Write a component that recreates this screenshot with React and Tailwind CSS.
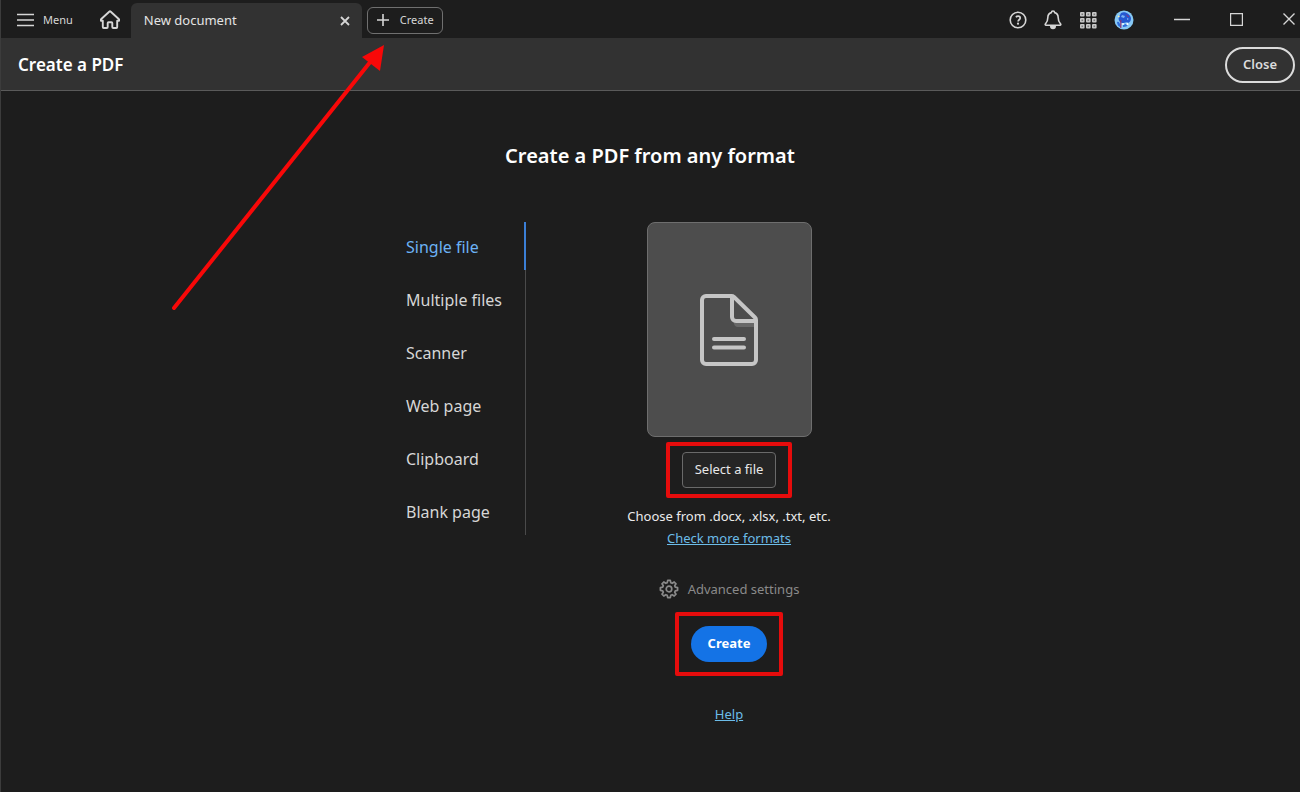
import { useState } from 'react'

const sources = [
  { id: 'single', label: 'Single file' },
  { id: 'multiple', label: 'Multiple files' },
  { id: 'scanner', label: 'Scanner' },
  { id: 'web', label: 'Web page' },
  { id: 'clipboard', label: 'Clipboard' },
  { id: 'blank', label: 'Blank page' }
]

const dots = [1, 7, 13]

function HomeIcon() {
  return (
    <svg className="w-5 h-5" viewBox="0 0 20 20" fill="none" stroke="currentColor" strokeWidth="1.9" strokeLinejoin="round" strokeLinecap="round" aria-hidden="true">
      <path d="M9.2 1.7 1 9.3c-.6.7-.2 1.5.6 1.5h1.2v6.3c0 .5.4.9.9.9h3.1c.5 0 .9-.4.9-.9v-4c0-.5.3-.8.8-.8h3c.5 0 .8.3.8.8v4c0 .5.4.9.9.9h3.1c.5 0 .9-.4.9-.9v-6.3h1.2c.8 0 1.2-.8.6-1.5l-8.2-7.6a1.2 1.2 0 0 0-1.6 0Z" />
    </svg>
  )
}

function HelpIcon() {
  return (
    <svg className="w-[18px] h-[18px]" viewBox="0 0 18 18" fill="none" stroke="currentColor" aria-hidden="true">
      <circle cx="9" cy="9" r="7.8" strokeWidth="1.6" />
      <path d="M6.9 6.2c.6-.7 1.3-1 2.2-1 1.2 0 2.1.7 2.1 1.8 0 1.7-2.1 1.8-2.1 3.5" strokeWidth="1.7" />
      <circle cx="9" cy="12.7" r="1.1" fill="currentColor" stroke="none" />
    </svg>
  )
}

function BellIcon() {
  return (
    <svg className="w-[18px] h-5" viewBox="0 0 18 20" fill="none" stroke="currentColor" strokeWidth="1.6" strokeLinejoin="round" aria-hidden="true">
      <path d="M7.4 2.6C7.4 1.7 8.1 1 9 1s1.6.7 1.6 1.6c2.4.6 3.6 2.6 3.6 5.2 0 3.4.8 4.6 2.3 6 .6.6.3 1.4-.5 1.4H2c-.8 0-1.1-.8-.5-1.4 1.5-1.4 2.3-2.6 2.3-6 0-2.6 1.2-4.6 3.6-5.2Z" />
      <path d="M6.8 16.2h4.4a2.2 2.2 0 0 1-4.4 0Z" fill="currentColor" />
    </svg>
  )
}

function AppsIcon() {
  return (
    <svg className="w-[18px] h-[18px]" viewBox="0 0 18 18" aria-hidden="true">
      {dots.map((y) =>
        dots.map((x) => (
          <g key={`${x}-${y}`}>
            <rect x={x} y={y} width="4.6" height="4.6" rx="1" fill="#c9c9c9" />
            <rect x={x + 1.5} y={y + 1.5} width="1.6" height="1.6" fill="#7c7c7c" />
          </g>
        ))
      )}
    </svg>
  )
}

function Avatar() {
  return (
    <svg className="w-5 h-5" viewBox="0 0 20 20" aria-hidden="true">
      <circle cx="10" cy="10" r="9.5" fill="#86c8f5" />
      <path d="M7 3c4-2 9 1 10 5 0 3-1 4-3 5-2-2-4 1-6 0-3-1-4-4-3-6Z" fill="#2558d0" />
      <path d="M3 12c2-1 3 1 4 5-2 0-4-2-4-5ZM9 15c2-1 4-1 6-2-1 3-3 4-6 4Z" fill="#2f6cda" />
      <path d="M8 5l3 1-1 2-3-1ZM13 8l2 1-2 1Z" fill="#79b4f4" />
      <circle cx="9" cy="14" r="1" fill="#f2fbff" />
      <circle cx="13.5" cy="14" r="1.2" fill="#f2fbff" />
      <path d="M6.8 10v8" stroke="#9b2c6a" strokeWidth="1.1" />
      <path d="M12.5 5l2.5 2" stroke="#a0306c" strokeWidth="1" />
      <path d="M4 6l1.5 1" stroke="#fff0a0" strokeWidth="1.4" />
    </svg>
  )
}

function GearIcon() {
  return (
    <svg className="w-5 h-5" viewBox="0 0 20 20" fill="none" stroke="currentColor" strokeWidth="1.7" strokeLinejoin="round" aria-hidden="true">
      <path d="M8.7 1.4h2.6l.5 2.3 1.4.6 2-1.3 1.8 1.8-1.3 2 .6 1.4 2.3.5v2.6l-2.3.5-.6 1.4 1.3 2-1.8 1.8-2-1.3-1.4.6-.5 2.3H8.7l-.5-2.3-1.4-.6-2 1.3L3 15.2l1.3-2-.6-1.4-2.3-.5V8.7l2.3-.5.6-1.4-1.3-2L4.8 3l2 1.3 1.4-.6Z" />
      <circle cx="10" cy="10" r="2.8" />
    </svg>
  )
}

function DocumentIcon() {
  return (
    <svg className="w-[60px] h-[74px]" viewBox="0 0 60 74" fill="none" aria-hidden="true">
      <path d="M35 29h21v5H39a4 4 0 0 1-4-5Z" fill="#686868" />
      <g stroke="#c6c6c6" strokeWidth="4" strokeLinejoin="round" strokeLinecap="round">
        <path d="M7 3h25.500c1 0 1.800.4 2.500 1l21 20.500c.7.7 1 1.500 1 2.500v40a4 4 0 0 1-4 4H7a4 4 0 0 1-4-4V7a4 4 0 0 1 4-4Z" />
        <path d="M33 4v20a4 4 0 0 0 4 4h19" />
        <path d="M15 46h30M15 54.500h30" />
      </g>
    </svg>
  )
}

function TitleBar() {
  return (
    <header className="flex h-[38px] items-center text-[#d6d6d6]">
      <button className="ml-[17px] mt-[2px] flex items-center gap-[9px] text-[11px]">
        <svg className="w-[17px] h-[14px]" viewBox="0 0 17 14" stroke="currentColor" strokeWidth="1.7" aria-hidden="true">
          <path d="M0 1.5h17M0 7h17M0 12.5h17" />
        </svg>
        Menu
      </button>
      <button className="ml-[27px] mt-[2px]" aria-label="Home">
        <HomeIcon />
      </button>
      <div className="ml-[11px] mt-[3px] flex h-[35px] w-[231px] items-center justify-between rounded-t-md bg-[#323232] pl-[13px] pr-3">
        <span className="text-[13px] text-[#e4e4e4]">New document</span>
        <button aria-label="Close tab">
          <svg className="w-[10px] h-[10px]" viewBox="0 0 10 10" stroke="currentColor" strokeWidth="1.8" aria-hidden="true">
            <path d="M1 1l8 8M9 1 1 9" />
          </svg>
        </button>
      </div>
      <button className="ml-[5px] mt-[2px] flex h-[27px] items-center gap-[11px] rounded-md border border-[#707070] pl-[9px] pr-2 text-[11px]">
        <svg className="w-3 h-3" viewBox="0 0 12 12" stroke="currentColor" strokeWidth="1.6" aria-hidden="true">
          <path d="M6 0v12M0 6h12" />
        </svg>
        Create
      </button>

      <div className="ml-auto mt-[2px] flex items-center gap-[17px]">
        <button aria-label="Help"><HelpIcon /></button>
        <button aria-label="Notifications"><BellIcon /></button>
        <button aria-label="Apps"><AppsIcon /></button>
        <button aria-label="Account"><Avatar /></button>
      </div>

      {/* Window controls */}
      <div className="ml-10 mr-[5px] flex items-center gap-10">
        <button aria-label="Minimize">
          <svg className="w-4 h-3" viewBox="0 0 16 12" stroke="currentColor" strokeWidth="1.5" aria-hidden="true">
            <path d="M0 6.5h16" />
          </svg>
        </button>
        <button aria-label="Maximize">
          <svg className="w-[13px] h-[13px]" viewBox="0 0 13 13" fill="none" stroke="currentColor" strokeWidth="1.2" aria-hidden="true">
            <path d="M.6.6h11.8v11.8H.6Z" />
          </svg>
        </button>
        <button aria-label="Close window">
          <svg className="w-3 h-3" viewBox="0 0 12 12" stroke="currentColor" strokeWidth="1.4" aria-hidden="true">
            <path d="M.5.5l11 11M11.5.5l-11 11" />
          </svg>
        </button>
      </div>
    </header>
  )
}

function SourceNav({ active, onSelect }) {
  return (
    <nav className="flex w-[158px] shrink-0 flex-col gap-[5px] self-start border-r border-[#4a4a4a]">
      {sources.map((source) => (
        <button
          key={source.id}
          onClick={() => onSelect(source.id)}
          className={
            source.id === active
              ? '-mr-px h-12 border-r-2 border-[#3b7fd6] pl-[38px] pt-[2px] text-left text-[16px] text-[#6cb2f5]'
              : 'h-12 pl-[38px] pt-[2px] text-left text-[16px] text-[#d6d6d6]'
          }
        >
          {source.label}
        </button>
      ))}
    </nav>
  )
}

export default function App() {
  const [active, setActive] = useState('single')

  return (
    <div className="relative flex min-h-screen flex-col bg-[#1d1d1d] font-['Noto_Sans',sans-serif]">
      <TitleBar />

      <div className="flex h-[53px] items-center justify-between border-b border-[#5a5a5a] bg-[#323232] pl-[18px] pr-[5px] pt-px">
        <h1 className="text-[17px] font-semibold text-white">Create a PDF</h1>
        <button className="h-9 rounded-full border-2 border-[#dcdcdc] px-4 text-[13px] font-semibold text-[#dcdcdc]">
          Close
        </button>
      </div>

      <main className="flex flex-col items-center pt-[49px]">
        <h2 className="text-[20px] leading-8 font-semibold text-white">Create a PDF from any format</h2>

        <div className="mt-[50px] flex w-full max-w-[564px]">
          <SourceNav active={active} onSelect={setActive} />

          <div className="flex flex-1 flex-col items-center">
            <div className="flex h-[215px] w-[165px] items-center justify-center rounded-lg border border-[#6e6e6e] bg-[#4d4d4d]">
              <DocumentIcon />
            </div>

            <div className="relative mt-[15px]">
              <button className="h-9 rounded border border-[#6a6a6a] bg-[#252525] px-3 text-[13px] text-[#e8e8e8]">
                Select a file
              </button>
              <span className="pointer-events-none absolute -inset-x-4 -inset-y-[10px] rounded-xs border-4 border-[#e60c0c]" />
            </div>

            <p className="mt-[17px] text-[13px] leading-[22px] text-[#ebebeb]">Choose from .docx, .xlsx, .txt, etc.</p>
            <a href="#formats" className="text-[13px] leading-[22px] text-[#6cbce8] underline">Check more formats</a>

            <button className="mt-[29px] flex items-center gap-[9px] text-[13px] leading-[22px] text-[#8a8a8a]">
              <GearIcon />
              Advanced settings
            </button>

            <div className="relative mt-[26px]">
              <button className="h-9 rounded-full bg-[#1473e6] px-[17px] text-[13px] font-bold text-white">
                Create
              </button>
              <span className="pointer-events-none absolute -inset-x-4 -inset-y-[14px] rounded-xs border-4 border-[#e60c0c]" />
            </div>

            <a href="#help" className="mt-[41px] text-[13px] leading-[22px] text-[#6cbce8] underline">Help</a>
          </div>
        </div>
      </main>

      {/* Thin window frame */}
      <div className="pointer-events-none absolute inset-0 border-l border-[#3c3c3c]" />

      {/* Pointer to the Create tab button */}
      <svg className="pointer-events-none absolute left-[170px] top-[42px] h-[270px] w-[216px]" viewBox="0 0 216 270" aria-hidden="true">
        <path d="M4 266 201 19" stroke="#f80808" strokeWidth="4" strokeLinecap="round" />
        <path d="M214 3 210 29 192 15Z" fill="#f80808" />
      </svg>
    </div>
  )
}
